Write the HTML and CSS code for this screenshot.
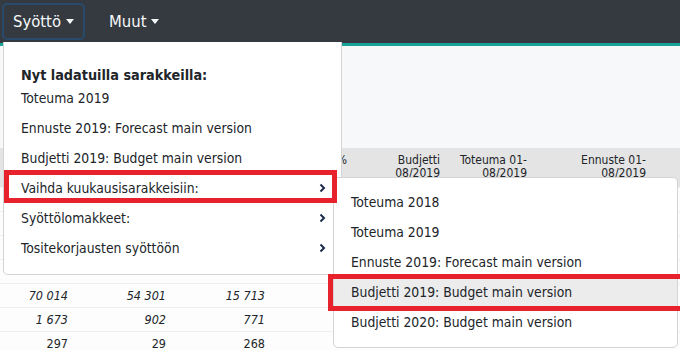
FILE: index.html
```html
<!DOCTYPE html>
<html lang="fi">
<head>
  <meta charset="UTF-8">
  <meta name="viewport" content="width=device-width, initial-scale=1.0">
  <title>Syöttö</title>
  <link rel="stylesheet" href="styles.css">
</head>
<body>
  <nav class="navbar">
    <button class="nav-toggle focused">Syöttö <span class="caret"></span></button>
    <button class="nav-toggle">Muut <span class="caret"></span></button>
  </nav>
  <div class="accent"></div>

  <main class="content">
    <table class="report">
      <colgroup>
        <col style="width: 72px">
        <col style="width: 98px">
        <col style="width: 99px">
        <col style="width: 82px">
        <col style="width: 93px">
        <col style="width: 87px">
        <col style="width: 119px">
        <col>
      </colgroup>
      <thead>
        <tr>
          <th>Toteuma 2019</th>
          <th>Budjetti 2019</th>
          <th>Erotus</th>
          <th>%</th>
          <th>Budjetti<br>08/2019</th>
          <th>Toteuma 01-<br>08/2019</th>
          <th>Ennuste 01-<br>08/2019</th>
          <th></th>
        </tr>
      </thead>
      <tbody>
        <tr><td>812 450</td><td>790 000</td><td>22 450</td><td>2,8</td><td>65 800</td><td>540 210</td><td>812 450</td><td></td></tr>
        <tr><td>402 118</td><td>410 500</td><td>-8 382</td><td>-2,0</td><td>34 200</td><td>268 930</td><td>402 118</td><td></td></tr>
        <tr><td>96 530</td><td>88 000</td><td>8 530</td><td>9,7</td><td>7 330</td><td>64 120</td><td>96 530</td><td></td></tr>
        <tr><td></td><td></td><td></td><td></td><td></td><td></td><td></td><td></td></tr>
        <tr class="sub"><td>70 014</td><td>54 301</td><td>15 713</td><td></td><td>4 520</td><td>46 680</td><td>70 014</td><td></td></tr>
        <tr class="sub"><td>1 673</td><td>902</td><td>771</td><td></td><td>75</td><td>1 115</td><td>1 673</td><td></td></tr>
        <tr><td>297</td><td>29</td><td>268</td><td></td><td>2</td><td>198</td><td>297</td><td></td></tr>
      </tbody>
    </table>
  </main>

  <div class="dropdown-menu main-menu">
    <div class="dropdown-header">Nyt ladatuilla sarakkeilla:</div>
    <a class="dropdown-item">Toteuma 2019</a>
    <a class="dropdown-item">Ennuste 2019: Forecast main version</a>
    <a class="dropdown-item">Budjetti 2019: Budget main version</a>
    <a class="dropdown-item has-sub">Vaihda kuukausisarakkeisiin:
      <svg class="chevron" width="7" height="10" viewBox="0 0 7 10"><polyline points="1.5,1.5 5,5 1.5,8.5" fill="none" stroke="#1d2b4a" stroke-width="2"/></svg>
    </a>
    <a class="dropdown-item has-sub">Syöttölomakkeet:
      <svg class="chevron" width="7" height="10" viewBox="0 0 7 10"><polyline points="1.5,1.5 5,5 1.5,8.5" fill="none" stroke="#1d2b4a" stroke-width="2"/></svg>
    </a>
    <a class="dropdown-item has-sub">Tositekorjausten syöttöön
      <svg class="chevron" width="7" height="10" viewBox="0 0 7 10"><polyline points="1.5,1.5 5,5 1.5,8.5" fill="none" stroke="#1d2b4a" stroke-width="2"/></svg>
    </a>
  </div>

  <div class="dropdown-menu sub-menu">
    <a class="dropdown-item">Toteuma 2018</a>
    <a class="dropdown-item">Toteuma 2019</a>
    <a class="dropdown-item">Ennuste 2019: Forecast main version</a>
    <a class="dropdown-item active">Budjetti 2019: Budget main version</a>
    <a class="dropdown-item">Budjetti 2020: Budget main version</a>
  </div>

  <!-- annotation boxes -->
  <div class="mark mark-month"></div>
  <div class="mark mark-budget"></div>
</body>
</html>
```

FILE: styles.css
```css
body {
  margin: 0;
  font-family: "DejaVu Sans Condensed", "DejaVu Sans", sans-serif;
  background-color: #f7f8fa;
  color: #212529;
  overflow: hidden;
}
.navbar {
  display: flex;
  align-items: center;
  gap: 13px;
  height: 43px;
  padding: 0 2px;
  box-sizing: border-box;
  background-color: #343a40;
}
.nav-toggle {
  display: flex;
  align-items: center;
  gap: 5px;
  height: 37px;
  padding: 0 9px;
  border: 2px solid transparent;
  border-radius: 5px;
  background: none;
  color: #f8f9fa;
  font-family: inherit;
  font-size: 16.5px;
  cursor: pointer;
}
.nav-toggle.focused {
  border-color: #2a4a6c;
}
.caret {
  width: 0;
  height: 0;
  border-top: 5px solid #f8f9fa;
  border-left: 4.5px solid transparent;
  border-right: 4.5px solid transparent;
}
.accent {
  height: 3px;
  background-color: #17a398;
}
.content {
  padding-top: 102px;
}
.report {
  width: 100%;
  border-collapse: collapse;
  table-layout: fixed;
  font-size: 12.5px;
}
.report th {
  height: 39px;
  padding: 6px 4px 7px;
  box-sizing: border-box;
  background-color: #e4e4e4;
  font-size: 12px;
  font-weight: normal;
  text-align: right;
  vertical-align: top;
  line-height: 13px;
}
.report td {
  height: 24px;
  padding: 0 4px;
  box-sizing: border-box;
  border-top: 1px solid #f0f0f0;
  background-color: #fdfdfd;
  text-align: right;
}
.report tr.sub td {
  font-style: italic;
}
.dropdown-menu {
  position: absolute;
  box-sizing: border-box;
  background-color: #fff;
  border: 1px solid #d4d4d4;
  font-size: 13.8px;
}
.main-menu {
  left: 3px;
  top: 42px;
  width: 339px;
  height: 233px;
  padding-top: 12px;
  border-top: none;
  border-radius: 0 0 5px 5px;
}
.sub-menu {
  left: 333px;
  top: 177px;
  width: 345px;
  height: 171px;
  padding-top: 9px;
  border-radius: 5px;
}
.dropdown-header {
  padding: 14px 17px 0;
  line-height: 15px;
  font-size: 14.3px;
  font-weight: bold;
}
.dropdown-item {
  display: flex;
  justify-content: space-between;
  align-items: center;
  height: 30px;
  padding: 0 15px 0 17px;
  color: #212529;
  cursor: pointer;
}
.dropdown-item.active {
  background-color: #ececec;
}
.mark {
  position: absolute;
  box-sizing: border-box;
  border: 5px solid #e8222c;
}
.mark-month {
  left: 4px;
  top: 170px;
  width: 333px;
  height: 33px;
}
.mark-budget {
  left: 328px;
  top: 274px;
  width: 360px;
  height: 37px;
}
```
